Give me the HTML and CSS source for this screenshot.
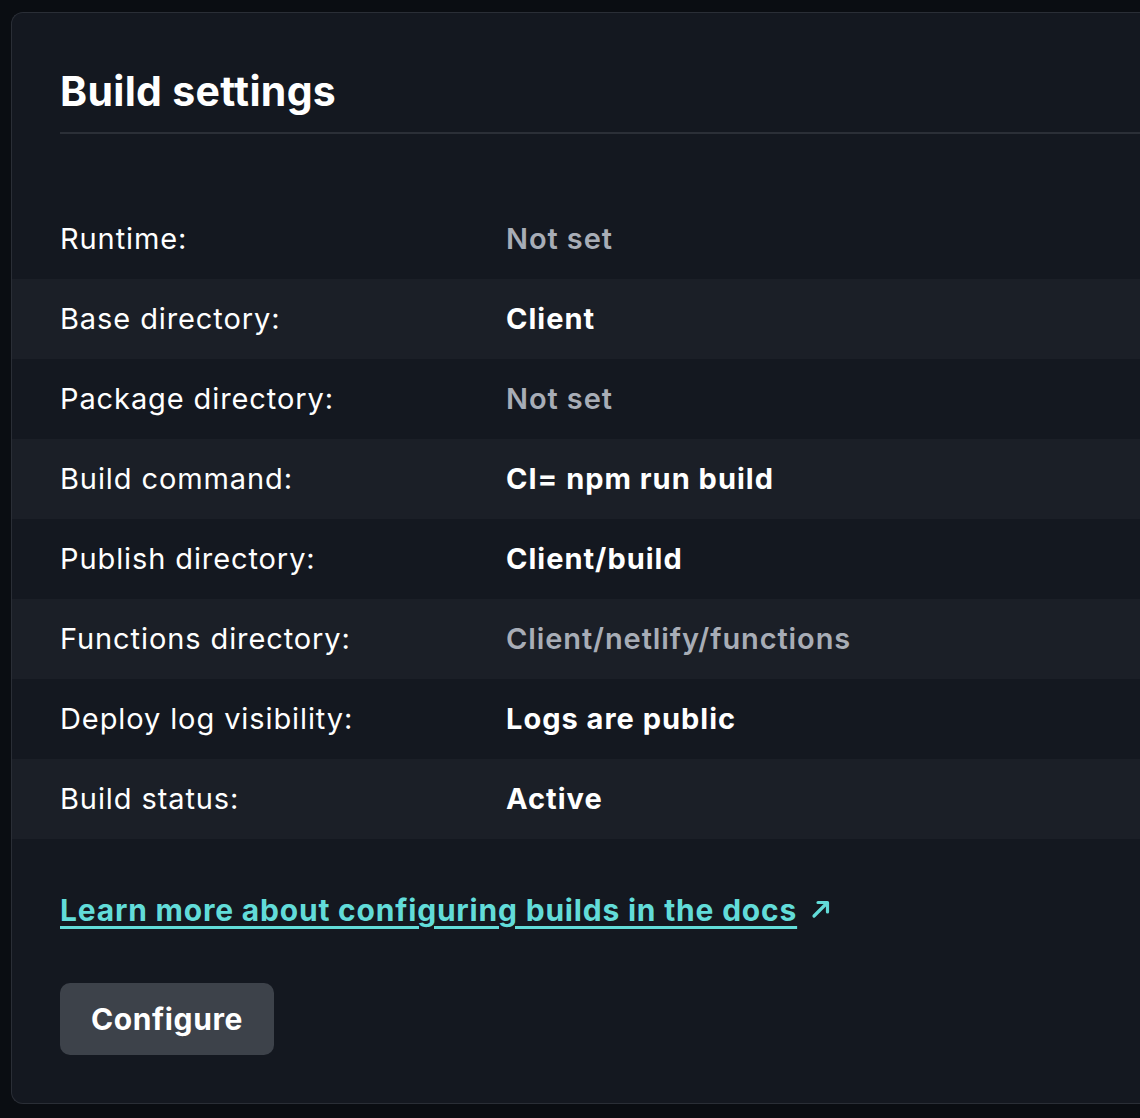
FILE: index.html
```html
<!DOCTYPE html>
<html lang="en">
<head>
<meta charset="utf-8">
<title>Build settings</title>
<link rel="stylesheet" href="styles.css">
</head>
<body>
<section class="card">
  <header class="card-head">
    <h2 class="title">Build settings</h2>
  </header>
  <dl class="settings">
    <div class="row"><dt>Runtime:</dt><dd class="muted">Not set</dd></div>
    <div class="row"><dt>Base directory:</dt><dd>Client</dd></div>
    <div class="row"><dt>Package directory:</dt><dd class="muted">Not set</dd></div>
    <div class="row"><dt>Build command:</dt><dd>CI= npm run build</dd></div>
    <div class="row"><dt>Publish directory:</dt><dd>Client/build</dd></div>
    <div class="row"><dt>Functions directory:</dt><dd class="muted">Client/netlify/functions</dd></div>
    <div class="row"><dt>Deploy log visibility:</dt><dd>Logs are public</dd></div>
    <div class="row"><dt>Build status:</dt><dd>Active</dd></div>
  </dl>
  <p class="docs"><a class="docs-link" href="#">Learn more about configuring builds in the docs</a><svg class="ext" width="22" height="22" viewBox="0 0 22 22" aria-hidden="true"><path d="M4 18 L17 5 M8 4.5 H17.5 V14" fill="none" stroke="#62dcd9" stroke-width="3.2" stroke-linecap="round" stroke-linejoin="round"/></svg></p>
  <button class="btn" type="button">Configure</button>
</section>
</body>
</html>
```

FILE: styles.css
```css
html, body {
  margin: 0;
  padding: 0;
  background: #0a0d12;
}
body {
  font-family: Inter, "Noto Sans", "Liberation Sans", sans-serif;
  color: #ffffff;
  padding: 12px 0 0 11px;
  height: 1118px;
  box-sizing: border-box;
  overflow: hidden;
}
.card {
  background: #141820;
  border: 1px solid #2a2e36;
  border-right: none;
  border-radius: 12px 0 0 12px;
  padding: 0 0 48px 0;
  height: 1092px;
  box-sizing: border-box;
}
.card-head {
  margin-left: 48px;
  border-bottom: 2px solid #2b2f37;
  padding-top: 54px;
  height: 65px;
}
.title {
  margin: 0;
  font-size: 41px;
  line-height: 48px;
  font-weight: 700;
  letter-spacing: 0.3px;
}
.settings {
  margin: 65px 0 0 0;
  padding: 0;
}
.row {
  display: flex;
  align-items: center;
  height: 80px;
  box-sizing: border-box;
  padding: 0 0 2px 48px;
  font-size: 29px;
  letter-spacing: 0.9px;
}
.row:nth-child(even) {
  background: #1b1f27;
}
.row dt {
  width: 446px;
  margin: 0;
  font-weight: 400;
  color: #ffffff;
}
.row dd {
  margin: 0;
  font-weight: 700;
  color: #ffffff;
  letter-spacing: 1px;
}
.row dd.muted {
  color: #a8adb6;
  font-weight: 600;
  letter-spacing: 0.9px;
}
.docs {
  margin: 51px 0 0 48px;
  display: flex;
  align-items: center;
  gap: 13px;
  height: 40px;
}
.docs-link {
  color: #62dcd9;
  font-size: 30px;
  font-weight: 700;
  letter-spacing: 0.8px;
  text-decoration: underline;
  text-decoration-thickness: 3px;
  text-underline-offset: 5px;
}
.ext {
  display: block;
  margin-top: -2px;
}
.btn {
  display: block;
  margin: 53px 0 0 48px;
  width: 214px;
  height: 72px;
  border: none;
  border-radius: 10px;
  background: #3d424a;
  color: #ffffff;
  font-family: inherit;
  font-size: 30px;
  font-weight: 700;
  letter-spacing: 0.6px;
  padding: 0;
}
```
